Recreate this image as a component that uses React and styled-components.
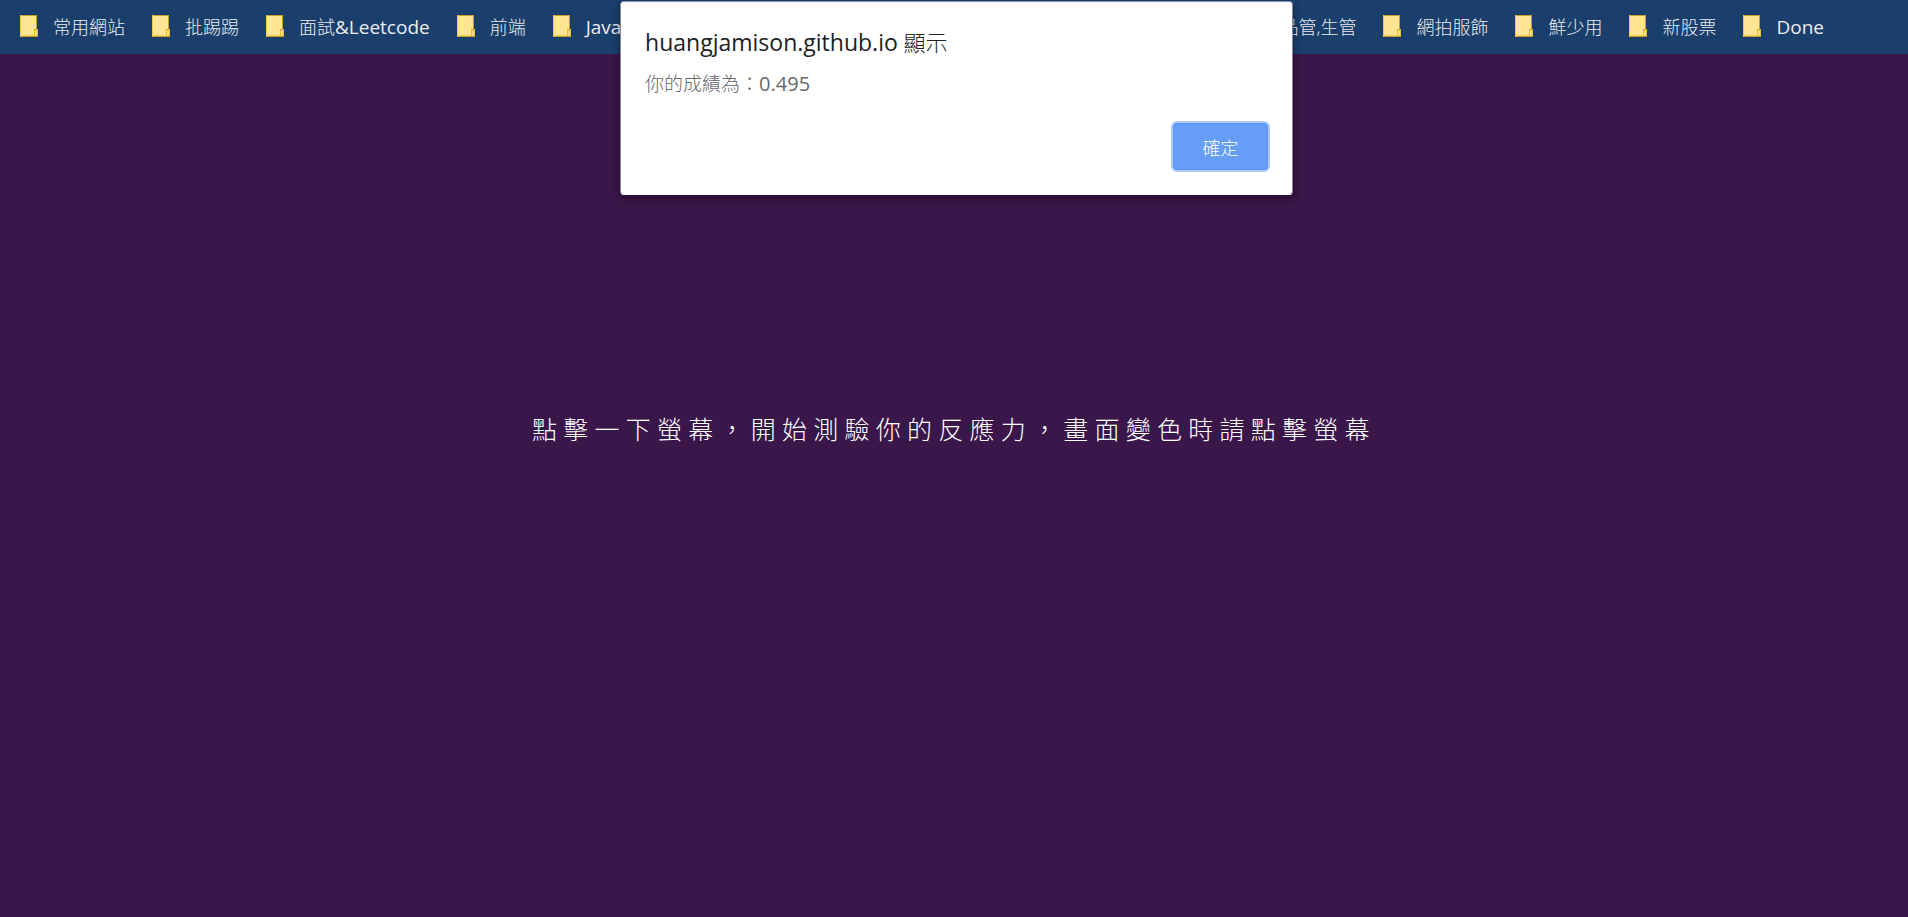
import React from "react";
import styled, { createGlobalStyle } from "styled-components";

const GlobalStyle = createGlobalStyle`
  * { box-sizing: border-box; }
  body {
    margin: 0;
    background: #3a164a;
    font-family: "Open Sans", "Noto Sans CJK TC", sans-serif;
  }
`;

const Page = styled.div`
  position: relative;
  display: flex;
  flex-direction: column;
  min-height: 100vh;
  overflow: hidden;
`;

const BookmarkBar = styled.nav`
  display: flex;
  justify-content: space-between;
  height: 54px;
  padding: 0 84px 0 20px;
  background: #1a3f6c;
`;

const BookmarkList = styled.ul`
  display: flex;
  align-items: center;
  gap: 27px;
  margin: 0;
  padding: 0;
  list-style: none;
`;

const Bookmark = styled.a`
  display: flex;
  align-items: center;
  gap: 15px;
  color: #ececee;
  font-size: 18px;
  font-weight: 300;
  line-height: 24px;
  white-space: nowrap;
  text-decoration: none;
`;

const Latin = styled.span`
  font-size: ${(p) => p.$size}px;
  font-weight: 400;
`;

const Folder = styled.svg`
  display: block;
  width: 18px;
  height: 22px;
  margin-bottom: 2px;
`;

const Stage = styled.main`
  flex: 1;
  display: flex;
  align-items: center;
  justify-content: center;
  padding-bottom: 116px;
`;

const Prompt = styled.p`
  margin: 0;
  color: #fff;
  font-family: "Noto Sans CJK TC", sans-serif;
  font-size: 25px;
  font-weight: 300;
  line-height: 36px;
  letter-spacing: 0.25em;
`;

const Alert = styled.section`
  position: absolute;
  top: 1px;
  left: 32.5%;
  width: 673px;
  padding: 23px 22px 22px 24px;
  border: 1px solid #8d839c;
  border-top-color: #8796b3;
  border-bottom-color: #fff;
  border-radius: 4px;
  background: #fff;
  box-shadow: 0 3px 8px rgba(0, 0, 0, 0.45);
`;

const AlertTitle = styled.h1`
  margin: 0;
  color: #202124;
  font-size: 22px;
  font-weight: 300;
  line-height: 34px;
`;

const AlertMessage = styled.p`
  margin: 12px 0 24px;
  color: #65686c;
  font-size: 19px;
  font-weight: 300;
  line-height: 26px;
`;

const AlertActions = styled.div`
  display: flex;
  justify-content: flex-end;
`;

const ConfirmButton = styled.button`
  width: 99px;
  height: 51px;
  padding: 0;
  border: 2px solid #b0cbfa;
  border-radius: 6px;
  background: #669df6;
  box-shadow: inset 0 0 0 1px #5b93f5;
  color: #fff;
  font-family: inherit;
  font-size: 18px;
  font-weight: 300;
`;

function FolderIcon() {
  return (
    <Folder viewBox="0 0 18 22" aria-hidden="true">
      <path d="M0 0H17V14H18V22H0Z" fill="#c79f2c" />
      <path d="M1 1H16V14H14V21H1Z" fill="#ffe594" />
      <path d="M0 0H1V22H0Z" fill="#f1c64a" />
      <path d="M1 20H14V21H1Z" fill="#f5d36b" />
      <path d="M14 21V16Q14 14 16 14H18V21Z" fill="#e9bd3d" />
      <path d="M15 21V16H17V20H16V21Z" fill="#ffe08a" />
    </Folder>
  );
}

const leftBookmarks = [
  ["常用網站"],
  ["批踢踢"],
  ["面試", "&Leetcode"],
  ["前端"],
  ["", "JavaScript"],
];

const rightBookmarks = [
  ["品管,生管"],
  ["網拍服飾"],
  ["鮮少用"],
  ["新股票"],
  ["", "Done"],
];

function Bookmarks({ items }) {
  return (
    <BookmarkList>
      {items.map(([label, latin]) => (
        <li key={label + latin}>
          <Bookmark href="#">
            <FolderIcon />
            <span>
              {label}
              {latin && <Latin $size={19}>{latin}</Latin>}
            </span>
          </Bookmark>
        </li>
      ))}
    </BookmarkList>
  );
}

export default function App() {
  return (
    <Page>
      <GlobalStyle />
      <BookmarkBar>
        <Bookmarks items={leftBookmarks} />
        <Bookmarks items={rightBookmarks} />
      </BookmarkBar>
      <Stage>
        <Prompt>點擊一下螢幕，開始測驗你的反應力，畫面變色時請點擊螢幕</Prompt>
      </Stage>
      <Alert role="alertdialog" aria-labelledby="alert-title" aria-describedby="alert-message">
        <AlertTitle id="alert-title">
          <Latin $size={23}>huangjamison.github.io</Latin> 顯示
        </AlertTitle>
        <AlertMessage id="alert-message">
          你的成績為：<Latin $size={20}>0.495</Latin>
        </AlertMessage>
        <AlertActions>
          <ConfirmButton type="button">確定</ConfirmButton>
        </AlertActions>
      </Alert>
    </Page>
  );
}
